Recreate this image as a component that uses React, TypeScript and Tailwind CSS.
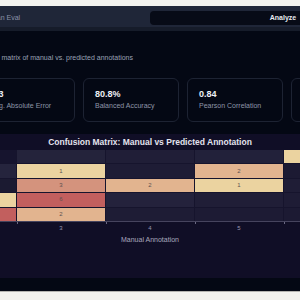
const stats = [
  { value: "0.3", label: "Avg. Absolute Error" },
  { value: "80.8%", label: "Balanced Accuracy" },
  { value: "0.84", label: "Pearson Correlation" },
  { value: "0.71", label: "Cohen's Kappa" },
];

const Y = "#ebd3a0";
const P = "#e2b48f";
const S = "#d4937d";
const R = "#c25f5e";

// each row: [colour, count]; count 0 is drawn without a label
const matrix: [string, number][][] = [
  [["#16142e", 0], ["#24233b", 0], ["#201e37", 0], ["#22213a", 0], [Y, 1]],
  [["#25243d", 0], [Y, 1], ["#1e1c35", 0], [P, 2], ["#1c1a33", 0]],
  [["#1b1a31", 0], [S, 3], [P, 2], [Y, 1], ["#1f1d36", 0]],
  [[Y, 1], [R, 6], ["#24223c", 0], ["#201e37", 0], ["#1e1c35", 0]],
  [[R, 5], [P, 2], ["#1e1c35", 0], ["#1d1b34", 0], ["#1c1a33", 0]],
];

const ticks = ["2", "3", "4", "5", "6"];

export default function App() {
  return (
    <div className="h-[300px] w-[300px] overflow-hidden bg-[#f2f2ee] font-['Liberation_Sans',Arial,sans-serif]">
      <div className="h-[6px]" />
      <div className="flex h-[21px] items-start gap-[2px] bg-[#1f2638] pt-[5px]">
        <div className="-ml-[18px] flex h-[14px] w-[166px] shrink-0 items-center whitespace-nowrap text-[7px] font-medium text-[#8b93a7]">
          Human Eval
        </div>
        <div className="flex h-[14px] w-[266px] shrink-0 items-center justify-center rounded-[4px] bg-[#070b17] text-[7px] font-semibold text-[#e8eaf0]">
          Analyze
        </div>
      </div>
      <div className="h-[4px] bg-[#161c2a]" />

      <div className="h-[260px] bg-[#040814] pt-[22px]">
        <p className="-ml-[32px] whitespace-nowrap text-[7px] leading-[10px] text-[#9aa2b4]">
          Confusion matrix of manual vs. predicted annotations
        </p>

        <div className="-ml-[21px] mt-[15px] flex gap-[8px]">
          {stats.map((s) => (
            <div
              key={s.label}
              className="flex h-[44px] w-[96px] shrink-0 flex-col rounded-[6px] border border-[#1d2333] px-[11px] pt-[9px] whitespace-nowrap"
            >
              <div className="text-[9px] font-semibold leading-[12px] text-[#eef0f5]">{s.value}</div>
              <div className="mt-[1px] text-[7px] leading-[10px] text-[#8e96a8]">{s.label}</div>
            </div>
          ))}
        </div>

        <section className="mt-[12px] h-[144px] bg-[#100e26] pt-[2px]">
          <h3 className="whitespace-nowrap text-center text-[8.5px] font-bold leading-[12px] text-[#e4e3ee]">
            Confusion Matrix: Manual vs Predicted Annotation
          </h3>

          <div className="-ml-[72px] mt-[2px] grid w-[444px] grid-cols-[repeat(5,88px)] grid-rows-[repeat(5,13.4px)] gap-px bg-[#16142d]">
            {matrix.flat().map(([color, n], i) => (
              <div
                key={i}
                className="flex items-center justify-center text-[6px] text-[#5e5150]"
                style={{ backgroundColor: color }}
              >
                {n > 0 ? n : ""}
              </div>
            ))}
          </div>

          <div className="h-px bg-[#46445e]" />
          <div className="-ml-[72px] grid h-[2px] w-[444px] grid-cols-[repeat(5,88px)] gap-px">
            {ticks.map((t, i) => (
              <div key={t} className={i > 0 ? "border-l border-[#6a6882]" : ""} />
            ))}
          </div>
          <div className="-ml-[72px] grid w-[444px] grid-cols-[repeat(5,88px)] gap-px">
            {ticks.map((t) => (
              <div key={t} className="text-center text-[6px] leading-[8px] text-[#9896ae]">
                {t}
              </div>
            ))}
          </div>
          <div className="mt-[3px] text-center text-[7px] leading-[10px] text-[#a9a8bd]">Manual Annotation</div>
        </section>
      </div>
      <div className="h-[4px] border-t border-[#b4b4b0]" />
    </div>
  );
}
